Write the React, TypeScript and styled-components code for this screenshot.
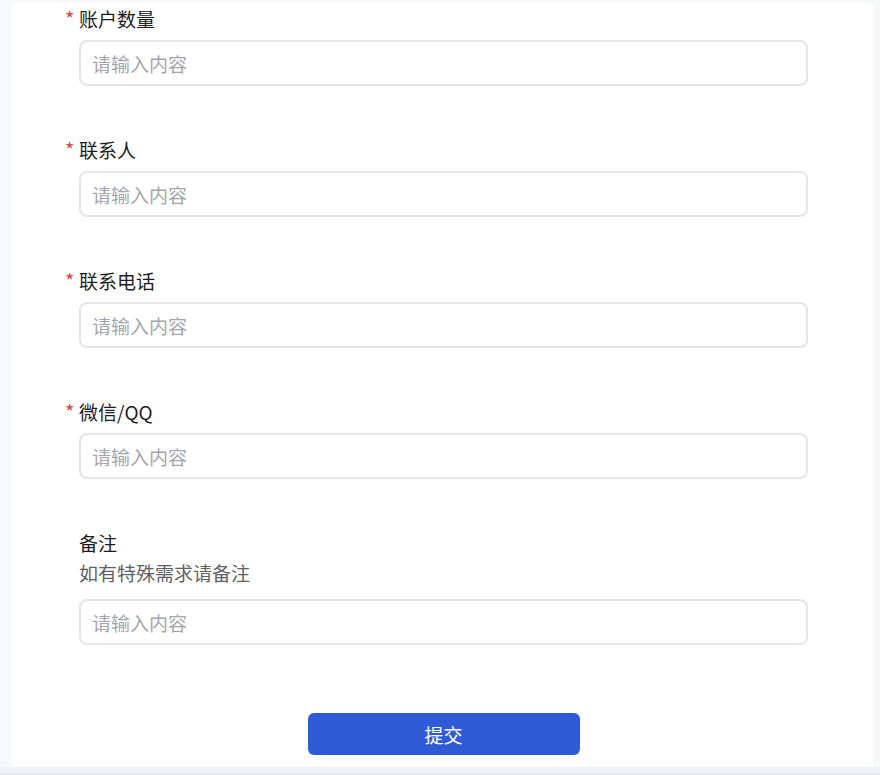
import React from 'react'
import styled, { createGlobalStyle } from 'styled-components'

const GlobalStyle = createGlobalStyle`
  html, body {
    margin: 0;
    padding: 0;
    background: #f7f8fa;
    font-family: "Noto Sans CJK SC", "Noto Sans", sans-serif;
  }
  * { box-sizing: border-box; }
`;

const Page = styled.div`
  padding: 3px 7px 0 12px;
  min-height: 775px;
`;

const Card = styled.div`
  background: #ffffff;
  padding: 4px 65px 12px 67px;
`;

const Field = styled.div<{ $gap?: number }>`
  display: flex;
  flex-direction: column;
  margin-bottom: ${p => p.$gap ?? 52}px;
`;

const Label = styled.div`
  font-size: 19px;
  line-height: 24px;
  color: #1d1d1f;
  margin-bottom: 9px;
`;

const Star = styled.span`
  display: inline-block;
  width: 14px;
  margin-left: -14px;
  color: #d9453f;
  font-size: 20px;
`;

const Hint = styled.div`
  font-size: 19px;
  line-height: 24px;
  color: #5f6166;
  margin-top: -3px;
  margin-bottom: 14px;
`;

const Input = styled.input`
  height: 46px;
  width: 100%;
  border: 2px solid #e3e5e9;
  border-radius: 8px;
  padding: 0 11px;
  font-family: inherit;
  font-size: 19px;
  color: #303133;
  background: #fff;
  outline: none;
  &::placeholder {
    color: #a3a6ad;
  }
`;

const Actions = styled.div`
  display: flex;
  justify-content: center;
  padding-top: 16px;
`;

const Submit = styled.button`
  width: 272px;
  height: 42px;
  border: none;
  border-radius: 6px;
  background: #2f5bd6;
  color: #fff;
  font-family: inherit;
  font-size: 19px;
  cursor: pointer;
`;

const BottomBar = styled.div`
  height: 8px;
  margin: 0 -7px 0 -12px;
  background: #eff2f7;
  border-bottom: 2px solid #e6eaf0;
`;

const fields = [
  { label: '账户数量', required: true },
  { label: '联系人', required: true },
  { label: '联系电话', required: true },
  { label: '微信/QQ', required: true },
];

export default function App() {
  return (
    <>
      <GlobalStyle />
      <Page>
        <Card>
          {fields.map(f => (
            <Field key={f.label}>
              <Label>
                {f.required && <Star>*</Star>}
                {f.label}
              </Label>
              <Input placeholder="请输入内容" />
            </Field>
          ))}
          <Field $gap={52}>
            <Label>备注</Label>
            <Hint>如有特殊需求请备注</Hint>
            <Input placeholder="请输入内容" />
          </Field>
          <Actions>
            <Submit>提交</Submit>
          </Actions>
        </Card>
        <BottomBar />
      </Page>
    </>
  );
}
